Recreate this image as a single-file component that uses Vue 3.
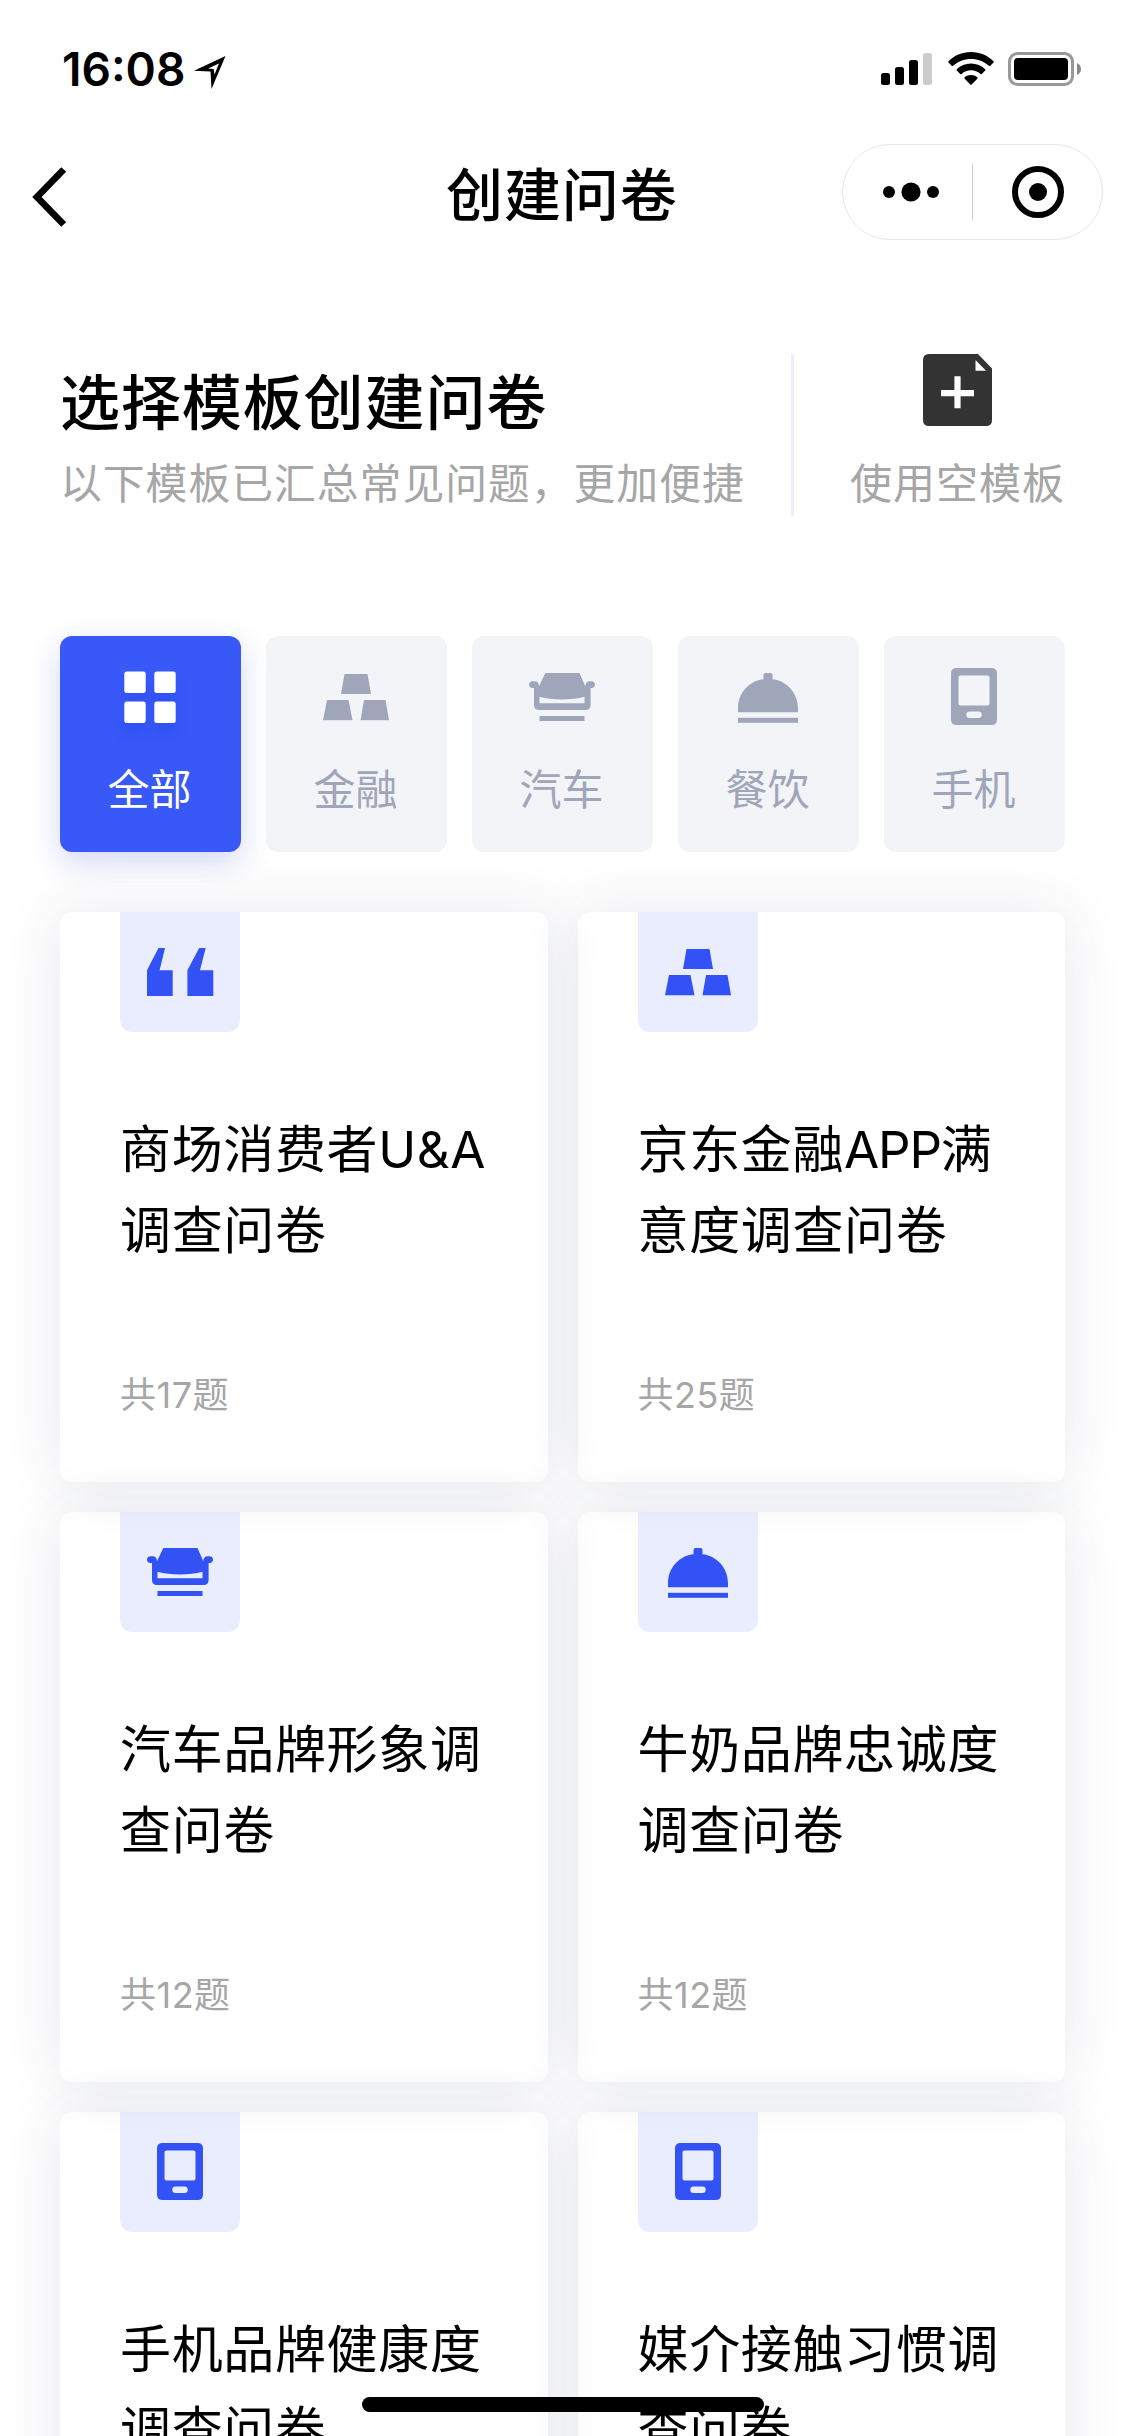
<script setup>
import { h } from 'vue'

const shapes = {
  grid: () => [
    [10, 10], [40, 10], [10, 40], [40, 40],
  ].map(([x, y]) => h('rect', { x: x + 0.3, y: y + 0.5, width: 21.4, height: 21.4, rx: 2.5 })),
  gold: () => h('path', {
    d: 'M24.5 13h23l3.5 20H21zM7 39h21.5l4 20.2H3zM44 39h21.5l3.5 20.2H40.500z',
  }),
  car: () => [
    h('path', {
      'fill-rule': 'evenodd',
      d: 'M19.300 12h34.200l5.700 13c.6-3.500 2-4.800 4.300-4.800h2.200c4.400 0 4.400 6.800 0 6.800h-1.100V44c0 3.200-2 5-5 5H13c-3.200 0-5-1.800-5-5V27H6.500c-4.600 0-4.600-6.800 0-6.800h2.300c2.300 0 3.700 1.300 4.300 4.800zM13.500 35.800V42.200H58.500V35.800C46 39.400 26 39.400 13.500 35.800z',
    }),
    h('rect', { x: 13.5, y: 55, width: 45, height: 5 }),
  ],
  dish: () => [
    h('path', { d: 'M6 51.300V47C6 31.500 18 19.500 31.500 18.200V14q0-2 2-2h5q2 0 2 2v4.200C54 19.500 66 31.500 66 47v4.300z' }),
    h('rect', { x: 6, y: 56.8, width: 60, height: 5 }),
  ],
  phone: () => h('path', {
    'fill-rule': 'evenodd',
    d: 'M18.500 7h35q5.500 0 5.500 5.500v46q0 5.500-5.500 5.500h-35Q13 64 13 58.500v-46Q13 7 18.500 7zM22.500 14.500q-2 0-2 2v26q0 2 2 2h27q2 0 2-2v-26q0-2-2-2zM31.500 50.500q-3.200 0-3.200 3.200t3.200 3.200h9q3.200 0 3.200-3.200t-3.200-3.200z',
  }),
  quote: () => h('path', {
    d: 'M14.500 12H21L15.600 34.300H28.700V60H3V34.300zM55.200 12h6.500L56 34.300H69.300V60H43.400V34.300z',
  }),
}

const Icon = (props) =>
  h('svg', { viewBox: '0 0 72 72', width: 72, height: 72, fill: 'currentColor' }, [shapes[props.name]()])
Icon.props = ['name']

const tabs = [
  { label: '全部', icon: 'grid', active: true },
  { label: '金融', icon: 'gold' },
  { label: '汽车', icon: 'car' },
  { label: '餐饮', icon: 'dish' },
  { label: '手机', icon: 'phone' },
]

const cards = [
  { icon: 'quote', lines: ['商场消费者U&A', '调查问卷'], count: 17 },
  { icon: 'gold', lines: ['京东金融APP满', '意度调查问卷'], count: 25 },
  { icon: 'car', lines: ['汽车品牌形象调', '查问卷'], count: 12 },
  { icon: 'dish', lines: ['牛奶品牌忠诚度', '调查问卷'], count: 12 },
  { icon: 'phone', lines: ['手机品牌健康度', '调查问卷'], count: 15 },
  { icon: 'phone', lines: ['媒介接触习惯调', '查问卷'], count: 15 },
]

// Splits a line into runs so that capital-only words can be set tighter
const runs = (line) => line.split(/([A-Z]{2,})/).filter(Boolean)
</script>

<template>
  <div class="screen">
    <div class="status">
      <span class="time">16:08</span>
      <svg class="location" width="32" height="32" viewBox="0 0 32 32">
        <path fill-rule="evenodd" d="M31.500 0 17.500 33 16.500 15.500 0 14.800zM25 7.500 14 12.400l5.700.7.800 5.400z" />
      </svg>
      <svg class="signal" width="51" height="34" viewBox="0 0 51 34">
        <rect x="0" y="21" width="9" height="12" rx="2.500" />
        <rect x="14" y="15" width="9" height="18" rx="2.500" />
        <rect x="28" y="8" width="9" height="25" rx="2.500" />
        <rect x="42" y="1" width="9" height="32" rx="2.500" fill="#ccc" />
      </svg>
      <svg class="wifi" width="46" height="34" viewBox="0 0 46 34">
        <path d="M23 0C32 0 40 3.600 45.500 9.200q.7.700 0 1.400L42.300 13.700q-.7.600-1.400 0C36 9.500 30 7 23 7S10 9.500 5.100 13.700q-.7.600-1.400 0L.500 10.600q-.7-.7 0-1.400C6 3.600 14 0 23 0z" />
        <path d="M23 11.500c5.600 0 10.500 2.200 14.200 5.700q.7.700 0 1.400l-3.400 3.300q-.7.600-1.400 0C29.800 19.600 26.600 18.300 23 18.300s-6.800 1.300-9.400 3.600q-.7.600-1.400 0l-3.400-3.300q-.7-.7 0-1.400C12.500 13.700 17.400 11.500 23 11.500z" />
        <path d="M23 23c2.500 0 4.600.8 6.300 2.300q.7.700 0 1.400l-5.600 5.700q-.7.700-1.400 0l-5.600-5.700q-.7-.7 0-1.400C18.400 23.800 20.500 23 23 23z" />
      </svg>
      <svg class="battery" width="73" height="34" viewBox="0 0 73 34">
        <rect x="1.500" y="1.500" width="63" height="31" rx="8" fill="none" stroke="#999" stroke-width="3" />
        <rect x="6" y="6" width="54" height="22" rx="4" />
        <path d="M69 11q4 2 4 6t-4 6z" fill="#888" />
      </svg>
    </div>

    <div class="nav">
      <svg class="back" width="36" height="60" viewBox="0 0 36 60">
        <path d="M32.700 2.500 6 30l26.700 27.500" fill="none" stroke="#000" stroke-width="6.800" />
      </svg>
      <h1>创建问卷</h1>
      <div class="capsule">
        <svg width="56" height="20" viewBox="0 0 56 20">
          <circle cx="6" cy="10" r="6" /><circle cx="28" cy="10" r="9.600" /><circle cx="50" cy="10" r="6" />
        </svg>
        <i></i>
        <svg width="52" height="52" viewBox="0 0 52 52">
          <circle cx="26" cy="26" r="23" fill="none" stroke="#000" stroke-width="6" />
          <circle cx="26" cy="26" r="9" />
        </svg>
      </div>
    </div>

    <div class="intro">
      <div class="intro-text">
        <h2>选择模板创建问卷</h2>
        <p>以下模板已汇总常见问题，更加便捷</p>
      </div>
      <div class="blank">
        <svg width="69" height="72" viewBox="0 0 69 72">
          <path fill="#333" fill-rule="evenodd" d="M6 0H55L69 14.500V66q0 6-6 6H6q-6 0-6-6V6Q0 0 6 0zM52.500 6v10.700H63zM31.400 22.300V36H18v6.200h13.400v12.100h6.200V42.200H51V36H37.600V22.300z" />
        </svg>
        <span>使用空模板</span>
      </div>
    </div>

    <div class="tabs">
      <div v-for="tab in tabs" :key="tab.label" class="tab" :class="{ active: tab.active }">
        <Icon :name="tab.icon" />
        <span>{{ tab.label }}</span>
      </div>
    </div>

    <div class="cards">
      <div v-for="card in cards" :key="card.lines[0]" class="card">
        <div class="badge"><Icon :name="card.icon" /></div>
        <div class="title">
          <div v-for="line in card.lines" :key="line">
            <span v-for="run in runs(line)" :key="run" :class="{ caps: /^[A-Z]/.test(run) }">{{ run }}</span>
          </div>
        </div>
        <div class="count">共{{ card.count }}题</div>
      </div>
    </div>

    <div class="home"></div>
  </div>
</template>

<style>
body {
  margin: 0;
  overflow: hidden;
}
</style>

<style scoped>
.screen {
  position: relative;
  width: 1125px;
  height: 2436px;
  overflow: hidden;
  background: #fff;
  color: #000;
  font-family: Inter, "Noto Sans CJK SC", sans-serif;
}
svg {
  display: block;
  flex: none;
}
h1, h2, p {
  margin: 0;
}
.status {
  display: flex;
  height: 132px;
  box-sizing: border-box;
  padding: 52px 44px 0 62px;
}
.time {
  width: 132px;
  font-size: 46px;
  line-height: 34px;
  font-weight: 600;
}
.location {
  margin-top: 4px;
  overflow: visible;
}
.signal {
  margin-left: auto;
}
.wifi {
  margin: 0 14px 0 16px;
}
.nav {
  display: flex;
  align-items: center;
  height: 124px;
  box-sizing: border-box;
  padding: 0 22px 0 31px;
}
.back {
  margin: 6px 379px 0 0;
}
h1 {
  font-size: 57px;
  line-height: 80px;
  font-weight: 500;
  letter-spacing: 0.900px;
  margin-top: 3px;
}
.capsule {
  display: flex;
  align-items: center;
  width: 261px;
  height: 96px;
  box-sizing: border-box;
  margin: -4px 0 0 auto;
  padding-left: 40px;
  border: 1px solid #e6e6e6;
  border-radius: 48px;
}
.capsule i {
  width: 1px;
  height: 56px;
  margin: 0 39px 0 33px;
  background: #ccc;
}
.intro {
  display: flex;
  height: 162px;
  margin-top: 98px;
  padding: 0 60px;
}
.intro-text {
  width: 731px;
  padding-top: 9px;
  border-right: 3px solid #eeeef6;
  white-space: nowrap;
}
h2 {
  font-size: 60px;
  letter-spacing: 0.900px;
  line-height: 80px;
  font-weight: 500;
}
p {
  margin-top: 11px;
  font-size: 41.800px;
  letter-spacing: 1px;
  line-height: 60px;
  color: #a6a6a6;
}
.blank {
  display: flex;
  flex-direction: column;
  align-items: center;
  margin-left: auto;
  white-space: nowrap;
}
.blank span {
  margin-top: 28px;
  font-size: 42px;
  letter-spacing: 1px;
  line-height: 60px;
  color: #a6a6a6;
}
.tabs {
  display: grid;
  grid-template-columns: repeat(5, 1fr);
  gap: 25px;
  margin: 120px 60px 0;
}
.tab {
  display: flex;
  flex-direction: column;
  align-items: center;
  height: 216px;
  box-sizing: border-box;
  padding: 25px 2px 0 0;
  border-radius: 12px;
  background: #f3f4f8;
  color: #a0a6ba;
  font-size: 42px;
  line-height: 60px;
}
.tab span {
  margin-top: 27px;
}
.tab.active {
  background: #3858f8;
  color: #fff;
  box-shadow: 0 10px 30px rgba(50, 75, 220, 0.22);
}
.tab.active svg {
  overflow: visible;
  filter: drop-shadow(0 12px 6px rgba(40, 70, 240, 0.4));
}
.cards {
  display: grid;
  grid-template-columns: 1fr 1fr;
  gap: 30px;
  margin: 60px 60px 0;
}
.card {
  height: 570px;
  box-sizing: border-box;
  padding-left: 60px;
  border-radius: 12px;
  box-shadow: 0 0 60px rgba(45, 55, 100, 0.11);
}
.badge {
  display: flex;
  align-items: center;
  justify-content: center;
  width: 120px;
  height: 120px;
  border-radius: 0 0 12px 12px;
  background: rgba(50, 82, 246, 0.105);
  color: #3252f6;
}
.title {
  margin-top: 77px;
  font-size: 51px;
  letter-spacing: 0.650px;
  line-height: 81px;
  white-space: nowrap;
}
.caps {
  letter-spacing: -1.200px;
}
.count {
  margin-top: 99px;
  font-size: 36px;
  letter-spacing: 0.500px;
  line-height: 50px;
  color: #a6a6a6;
}
.home {
  position: absolute;
  left: 362px;
  bottom: 24px;
  width: 402px;
  height: 15px;
  border-radius: 8px;
  background: #000;
}
</style>
